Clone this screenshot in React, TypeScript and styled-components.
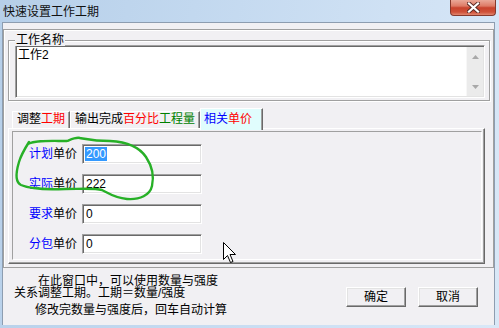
import React from "react";
import styled, { createGlobalStyle } from "styled-components";

const Global = createGlobalStyle`
  html, body { margin: 0; padding: 0; background: #ffffff; }
  body {
    font-family: "Liberation Sans", "Noto Sans CJK SC", sans-serif;
    font-size: 12px;
    color: #000;
  }
  * { box-sizing: border-box; }
`;

const FACE = "#f1f0f3";

const Window = styled.div`
  position: relative;
  width: 499px;
  height: 328px;
  display: flex;
  flex-direction: column;
  padding: 0 4px 3px 2px;
  background: linear-gradient(100deg, #b6cfe9 0%, #c2d8ef 35%, #cfe1f4 70%, #d9e8f7 100%);
  overflow: hidden;
`;

const TitleBar = styled.div`
  height: 22px;
  flex: none;
  display: flex;
  align-items: flex-start;
  justify-content: space-between;
  margin-right: -1px;
`;

const Title = styled.div`
  padding-left: 1px;
  line-height: 21px;
  font-size: 12px;
  font-family: "Noto Sans CJK SC", sans-serif;
  color: #111;
`;

const CloseButton = styled.div`
  width: 46px;
  height: 16px;
  display: flex;
  align-items: center;
  justify-content: center;
  border: 1px solid #86392c;
  border-top: none;
  border-radius: 0 0 4px 4px;
  background: linear-gradient(#eaa898 0%, #de7b66 40%, #c8432d 52%, #cf5138 80%, #e1866f 100%);
`;

const Client = styled.div`
  flex: 1;
  display: flex;
  flex-direction: column;
  background: ${FACE};
  border: 1px solid #8d9db0;
  border-bottom: none;
`;

const Panel = styled.div`
  width: 491px;
  height: 239px;
  margin-top: 6px;
  padding: 10px 0 0 4px;
  border: 1px solid #a0a0a0;
  box-shadow: inset 1px 1px 0 #ffffff;
  display: flex;
  flex-direction: column;
`;

const GroupBox = styled.div`
  position: relative;
  width: 482px;
  padding: 4px 4px 2px 6px;
  border: 1px solid #a0a0a0;
  box-shadow: inset 1px 1px 0 #ffffff, 1px 1px 0 #ffffff;
`;

const Legend = styled.span`
  position: absolute;
  top: -7px;
  left: 6px;
  padding: 0 1px;
  line-height: 12px;
  background: ${FACE};
`;

const Memo = styled.div`
  height: 53px;
  display: flex;
  background: #ffffff;
  border: 1px solid;
  border-color: #a0a0a0 #ffffff #ffffff #a0a0a0;
  box-shadow: inset 1px 1px 0 #696969, inset -1px -1px 0 #e3e3e3;
`;

const MemoText = styled.div`
  flex: 1;
  padding: 2px 2px 0 2px;
  line-height: 14px;
`;

const ScrollBar = styled.div`
  width: 17px;
  margin: 1px 1px 1px 0;
  display: flex;
  flex-direction: column;
  align-items: center;
  justify-content: space-between;
  padding: 8px 0 7px;
  background: #ebebeb;
  border-left: 1px solid #f7f7f7;
`;

const TabRow = styled.div`
  height: 20px;
  margin: 7px 0 0 4px;
  display: flex;
  align-items: flex-end;
`;

const Tab = styled.div<{ $active?: boolean }>`
  position: relative;
  z-index: ${(p) => (p.$active ? 1 : 0)};
  height: ${(p) => (p.$active ? 22 : 17)}px;
  margin-bottom: ${(p) => (p.$active ? -2 : 0)}px;
  padding: ${(p) => (p.$active ? "3px 10px 0 3px" : "0 4px")};
  line-height: 14px;
  white-space: nowrap;
  background: ${(p) => (p.$active ? "#e0fdfd" : FACE)};
  border-top: 1px solid #ffffff;
  border-left: 1px solid #ffffff;
  border-right: 1px solid #696969;
  box-shadow: inset -1px 0 0 #a0a0a0;
`;

const Ink = styled.span<{ $c: string }>`
  color: ${(p) => p.$c};
`;

const TabPanel = styled.div`
  width: 477px;
  height: 136px;
  padding: 2px 2px 3px 3px;
  display: flex;
  border: 1px solid;
  border-color: #ffffff #696969 #696969 #ffffff;
  box-shadow: inset -1px -1px 0 #a0a0a0;
`;

const TabInner = styled.div`
  flex: 1;
  border: 1px solid;
  border-color: #a0a0a0 #ffffff #ffffff #a0a0a0;
  padding: 12px 0 0 0;
`;

const FieldGrid = styled.div`
  display: grid;
  grid-template-columns: 64px 120px;
  grid-auto-rows: 20px;
  column-gap: 5px;
  row-gap: 10px;
  align-items: center;
`;

const FieldLabel = styled.div`
  text-align: right;
  line-height: 20px;
  white-space: nowrap;
`;

const Field = styled.div`
  height: 20px;
  padding: 2px 0 0 2px;
  background: #ffffff;
  line-height: 14px;
  border: 1px solid;
  border-color: #a0a0a0 #ffffff #ffffff #a0a0a0;
  box-shadow: inset 1px 1px 0 #696969, inset -1px -1px 0 #e3e3e3;
`;

const FieldValue = styled.span<{ $selected?: boolean }>`
  display: inline-block;
  padding: 0 1px;
  line-height: 14px;
  color: ${(p) => (p.$selected ? "#ffffff" : "#000000")};
  background: ${(p) => (p.$selected ? "#3399ff" : "transparent")};
`;

const Bottom = styled.div`
  flex: 1;
  display: flex;
  align-items: flex-start;
`;

const Notes = styled.div`
  flex: 1;
  padding-top: 7px;
  display: flex;
  flex-direction: column;
`;

const NoteLine = styled.div<{ $indent: number; $gap: number }>`
  padding-left: ${(p) => p.$indent}px;
  margin-top: ${(p) => p.$gap}px;
  line-height: 12px;
  white-space: nowrap;
`;

const ButtonRow = styled.div`
  display: flex;
  gap: 12px;
  margin: 19px 16px 0 0;
`;

const Button = styled.div`
  width: 60px;
  height: 20px;
  display: flex;
  align-items: center;
  justify-content: center;
  line-height: 14px;
  background: ${FACE};
  border: 1px solid;
  border-color: #ffffff #696969 #696969 #ffffff;
  box-shadow: inset -1px -1px 0 #a0a0a0, inset 1px 1px 0 #e3e3e3;
`;

const Overlay = styled.svg`
  position: absolute;
  left: 0;
  top: 0;
  width: 499px;
  height: 328px;
  pointer-events: none;
`;

const tabs: { parts: [string, string][]; active?: boolean }[] = [
  { parts: [["调整", "#000000"], ["工期", "#ff0000"]] },
  { parts: [["输出完成", "#000000"], ["百分比", "#ff0000"], ["工程量", "#008000"]] },
  { parts: [["相关", "#0000ff"], ["单价", "#ff0000"]], active: true },
];

const fields = [
  { key: "计划", value: "200", selected: true },
  { key: "实际", value: "222" },
  { key: "要求", value: "0" },
  { key: "分包", value: "0" },
];

const notes = [
  { text: "在此窗口中，可以使用数量与强度", indent: 35, gap: 0 },
  { text: "关系调整工期。工期＝数量/强度", indent: 11, gap: 0 },
  { text: "修改完数量与强度后，回车自动计算", indent: 32, gap: 5 },
];

export default function App() {
  return (
    <>
      <Global />
      <Window>
        <TitleBar>
          <Title>快速设置工作工期</Title>
          <CloseButton>
            <svg width="13" height="11" viewBox="0 0 13 11">
              <path
                d="M2 1.5 L11 9.5 M11 1.5 L2 9.5"
                stroke="#5a2a24"
                strokeWidth="4"
                strokeLinecap="square"
              />
              <path
                d="M2 1.5 L11 9.5 M11 1.5 L2 9.5"
                stroke="#ffffff"
                strokeWidth="2.2"
                strokeLinecap="square"
              />
            </svg>
          </CloseButton>
        </TitleBar>
        <Client>
          <Panel>
            <GroupBox>
              <Legend>工作名称</Legend>
              <Memo>
                <MemoText>工作2</MemoText>
                <ScrollBar>
                  <svg width="7" height="4" viewBox="0 0 7 4">
                    <path d="M3.5 0 L7 4 L0 4 Z" fill="#a8a8a8" />
                  </svg>
                  <svg width="7" height="4" viewBox="0 0 7 4">
                    <path d="M0 0 L7 0 L3.5 4 Z" fill="#a8a8a8" />
                  </svg>
                </ScrollBar>
              </Memo>
            </GroupBox>
            <TabRow>
              {tabs.map((t, i) => (
                <Tab key={i} $active={t.active}>
                  {t.parts.map(([s, c], j) => (
                    <Ink key={j} $c={c}>
                      {s}
                    </Ink>
                  ))}
                </Tab>
              ))}
            </TabRow>
            <TabPanel>
              <TabInner>
                <FieldGrid>
                  {fields.map((f) => (
                    <React.Fragment key={f.key}>
                      <FieldLabel>
                        <Ink $c="#0000ff">{f.key}</Ink>
                        <Ink $c="#000000">单价</Ink>
                      </FieldLabel>
                      <Field>
                        <FieldValue $selected={f.selected}>{f.value}</FieldValue>
                      </Field>
                    </React.Fragment>
                  ))}
                </FieldGrid>
              </TabInner>
            </TabPanel>
          </Panel>
          <Bottom>
            <Notes>
              {notes.map((n, i) => (
                <NoteLine key={i} $indent={n.indent} $gap={n.gap}>
                  {n.text}
                </NoteLine>
              ))}
            </Notes>
            <ButtonRow>
              <Button>确定</Button>
              <Button>取消</Button>
            </ButtonRow>
          </Bottom>
        </Client>
        <Overlay viewBox="0 0 499 328">
          <path
            d="M28 144 C35 140 50 141 67 141 C72 139 76 137 80 138 C86 139 95 141 110 141 C128 142 140 148 146 157 C152 166 154 177 152 186 C150 195 140 200 127 199 C115 198 108 193 102 190 C95 188 80 189 65 189 C45 190 28 188 21 185 C15 182 16 172 19 162 C21 155 24 150 29 142"
            fill="none"
            stroke="#27b027"
            strokeWidth="2.4"
            strokeLinecap="round"
            strokeLinejoin="round"
          />
          <path
            d="M223.5 242.5 L223.5 259.5 L227.5 255.5 L230.5 262.5 L233 261.5 L230 254.5 L235.5 254.5 Z"
            fill="#ffffff"
            stroke="#000000"
            strokeWidth="1"
            strokeLinejoin="miter"
          />
        </Overlay>
      </Window>
    </>
  );
}
